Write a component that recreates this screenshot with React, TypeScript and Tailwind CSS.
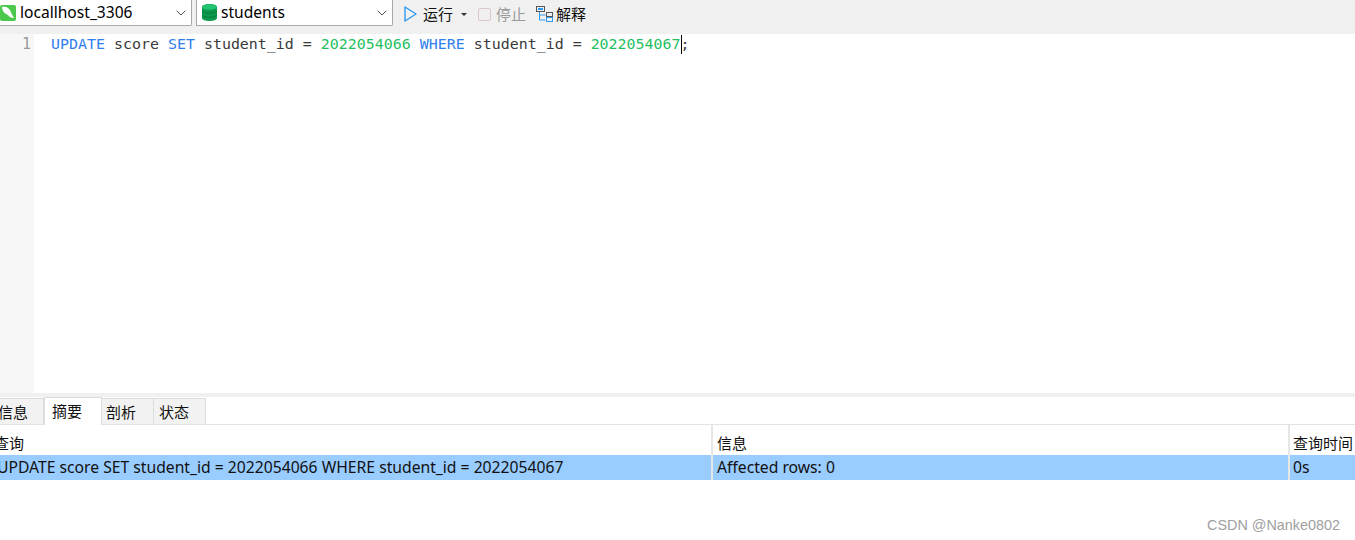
import { ChevronDown } from 'lucide-react'

const uiFont = "font-['Noto_Sans','Noto_Sans_CJK_SC',sans-serif]"

function ConnectionIcon() {
  return (
    <svg width="16" height="16" viewBox="0 0 16 16" className="shrink-0">
      <rect width="16" height="16" rx="2" fill="#4cc94c" />
      <path d="M2 2c3-1 6 0 8 3 1 2 2 5 4 8-3 0-5-1-6-3C6 9 4 8 3 6 2.500 5 2 3 2 2z" fill="#fff" />
    </svg>
  )
}

function DatabaseIcon() {
  return (
    <svg width="15" height="17" viewBox="0 0 15 17" className="shrink-0">
      <path d="M0 3c0-4 15-4 15 0v11c0 4-15 4-15 0z" fill="#0d9a4f" />
      <ellipse cx="7.500" cy="3" rx="7.500" ry="2.800" fill="#23c46f" />
      <path d="M0 7c2 3 13 3 15 0M0 11c2 3 13 3 15 0" fill="none" stroke="#0a7a3e" strokeWidth="1" />
    </svg>
  )
}

function PlayIcon() {
  return (
    <svg width="13" height="16" viewBox="0 0 13 16" fill="none" className="shrink-0">
      <path d="M1 1l11 7-11 7z" stroke="#2e9bf0" strokeWidth="1.400" strokeLinejoin="round" />
    </svg>
  )
}

function ExplainIcon() {
  return (
    <svg width="18" height="16" viewBox="0 0 18 16" fill="none" className="shrink-0">
      <rect x="0.500" y="0.500" width="8" height="5" stroke="#555" />
      <rect x="2" y="2" width="5" height="2" fill="#2e9bf0" />
      <path d="M3.500 6v8h6M3.500 9h6" stroke="#2e9bf0" />
      <rect x="10.500" y="6.500" width="6" height="4" stroke="#555" />
      <rect x="10.500" y="11.500" width="6" height="4" stroke="#2e9bf0" />
    </svg>
  )
}

function Select({ width, icon, label }: { width: string; icon: React.ReactNode; label: string }) {
  return (
    <div className={`${width} h-[26px] bg-white border-r border-b border-[#a8a8a8] flex items-center gap-[4px] rounded-br-[2px]`}>
      {icon}
      <span className="flex-1 pt-[1px] text-[15.600px] text-black">{label}</span>
      <ChevronDown className="h-4 w-4 text-[#555] mr-[2px]" strokeWidth={1.5} />
    </div>
  )
}

function Code() {
  return (
    <div className="pl-[17px] font-['DejaVu_Sans_Mono',monospace] text-[14.950px] leading-[20px] whitespace-pre text-[#3a3a3a] h-[20px] flex">
      <span className="text-[#2f80ed]">UPDATE</span>
      <span> score </span>
      <span className="text-[#2f80ed]">SET</span>
      <span> student_id = </span>
      <span className="text-[#1fbf5f]">2022054066</span>
      <span> </span>
      <span className="text-[#2f80ed]">WHERE</span>
      <span> student_id = </span>
      <span className="text-[#1fbf5f]">2022054067</span>
      <span className="relative">
        <span className="absolute left-0 top-[1px] h-[19px] w-px bg-black" />;
      </span>
    </div>
  )
}

export default function App() {
  return (
    <div className={`w-[1355px] h-[540px] overflow-hidden bg-white flex flex-col relative ${uiFont}`}>
      <div className="h-[34px] bg-[#f0f0f0] flex items-start shrink-0">
        <Select width="w-[192px]" icon={<ConnectionIcon />} label="locallhost_3306" />
        <div className="w-[4px]" />
        <div className="border-l border-[#a8a8a8]">
          <Select width="w-[196px]" icon={<span className="ml-[5px]"><DatabaseIcon /></span>} label="students" />
        </div>
        <div className="flex items-center h-[28px] ml-[11px] text-[15px] text-[#111]">
          <PlayIcon />
          <span className="ml-[6px]">运行</span>
          <span className="ml-[8px] border-x-[3px] border-t-[3px] border-x-transparent border-t-[#333]" />
          <span className="ml-[11px] w-[13px] h-[13px] border border-[#e0c8c8] rounded-[2px]" />
          <span className="ml-[5px] text-[#9a9a9a]">停止</span>
          <span className="ml-[10px]"><ExplainIcon /></span>
          <span className="ml-[2px]">解释</span>
        </div>
      </div>

      <div className="h-[359px] flex shrink-0">
        <div className="w-[34px] bg-[#f7f7f7] text-right pr-[3px] font-['DejaVu_Sans_Mono',monospace] text-[15px] leading-[20px] text-[#999]">1</div>
        <Code />
      </div>

      <div className="h-[4px] bg-[#f0f0f0] shrink-0" />

      <div className="h-[28px] flex items-end border-b border-[#e2e2e2] shrink-0 text-[15px] text-[#111]">
        <div className="w-[44px] h-[26px] bg-[#f2f2f2] border-r border-t border-[#dcdcdc] pt-[2px] flex items-center -indent-[2px] leading-none">信息</div>
        <div className="w-[58px] h-[28px] bg-white border-x border-t border-[#dcdcdc] -mb-px pl-[7px] pb-[1px] flex items-center leading-none">摘要</div>
        <div className="w-[52px] h-[26px] bg-[#f2f2f2] border-r border-t border-[#dcdcdc] pl-[4px] pt-[2px] flex items-center leading-none">剖析</div>
        <div className="w-[52px] h-[26px] bg-[#f2f2f2] border-r border-t border-[#dcdcdc] pl-[5px] pt-[2px] flex items-center leading-none">状态</div>
      </div>

      <div className="h-[30px] flex items-center text-[15px] text-[#111] shrink-0">
        <div className="w-[717px] -ml-[6px] h-full flex items-center pt-[6px] leading-none">查询</div>
        <div className="w-[577px] h-full border-l-2 border-[#e6e6e6] pl-[4px] pt-[6px] flex items-center leading-none">信息</div>
        <div className="w-[66px] h-full border-l-2 border-[#e6e6e6] pl-[3px] pt-[6px] flex items-center leading-none whitespace-nowrap">查询时间</div>
      </div>

      <div className="h-[25px] bg-[#99ccff] flex items-center text-[15.700px] text-[#111] shrink-0">
        <div className="w-[711px] -ml-[3px] whitespace-pre">UPDATE score SET student_id = 2022054066 WHERE student_id = 2022054067</div>
        <div className="w-[577px] ml-[3px] h-full border-l-2 border-[#e6e6e6] pl-[4px] flex items-center">Affected rows: 0</div>
        <div className="flex-1 h-full border-l-2 border-[#e6e6e6] pl-[3px] flex items-center">0s</div>
      </div>

      <div className="absolute right-[15px] top-[516px] text-[14.400px] leading-[18px] text-[#a0a0a0] font-['Liberation_Sans',sans-serif]">CSDN @Nanke0802</div>
    </div>
  )
}
